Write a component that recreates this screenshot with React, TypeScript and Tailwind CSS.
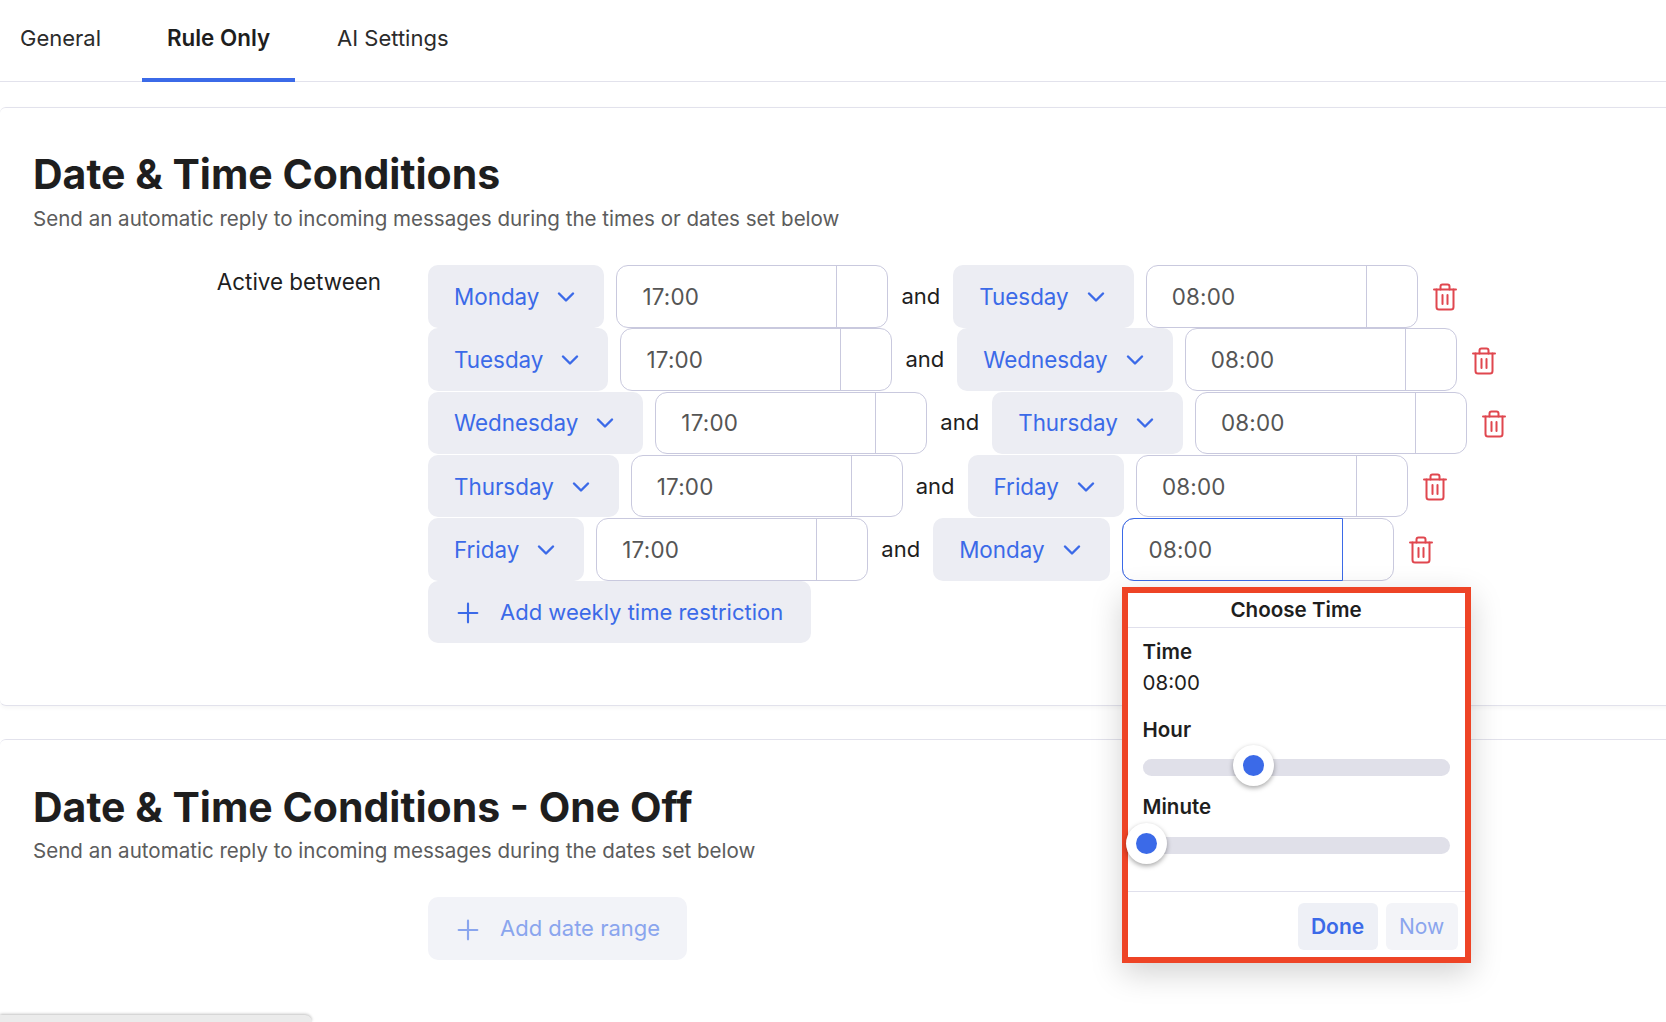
import React from 'react';
import { ChevronDown, Plus } from 'lucide-react';

const rows = [
  { from: 'Monday', to: 'Tuesday' },
  { from: 'Tuesday', to: 'Wednesday' },
  { from: 'Wednesday', to: 'Thursday' },
  { from: 'Thursday', to: 'Friday' },
  { from: 'Friday', to: 'Monday' },
];

function TrashIcon() {
  return (
    <svg width="26" height="28" viewBox="0 0 26 28" fill="none" stroke="#e0474f" strokeWidth="2" strokeLinecap="round" strokeLinejoin="round">
      <path d="M2 6.5h22" />
      <path d="M8.5 6.5V3.5a2 2 0 0 1 2-2h5a2 2 0 0 1 2 2v3" />
      <path d="M4.5 6.5v17.5a2.5 2.5 0 0 0 2.5 2.5h12a2.5 2.5 0 0 0 2.5-2.5V6.5" />
      <path d="M10.5 12v9" />
      <path d="M15.5 12v9" />
    </svg>
  );
}

function DaySelect({ day }: { day: string }) {
  return (
    <button className="flex h-[62.5px] shrink-0 items-center rounded-[10px] bg-[#ecedf3] pl-[26px] pr-[24px] text-[22.4px] text-[#3b6ae8]">
      <span className="mt-px">{day}</span>
      <ChevronDown className="ml-[13px] mt-px" size={28} strokeWidth={2.1} />
    </button>
  );
}

function TimeInput({ value, active, children }: { value: string; active?: boolean; children?: React.ReactNode }) {
  return (
    <div className="relative ml-3 flex h-[62.5px] w-[272px] shrink-0 rounded-[12px] border border-[#c9c9de] bg-white text-[22.4px] tracking-[0.2px] text-[#555555]">
      <div
        className={
          active
            ? '-m-px flex w-[221px] items-center rounded-l-[12px] border border-[#3b6ae8] pl-[26px] pt-px'
            : 'flex w-[220px] items-center border-r border-[#c9c9de] pl-[25px] pt-px'
        }
      >
        {value}
      </div>
      {children}
    </div>
  );
}

function Slider({ thumbClass }: { thumbClass: string }) {
  return (
    <div className="relative h-[17px] rounded-full bg-[#e0e0e9]">
      <div className={`absolute top-[-14px] flex h-[41px] w-[41px] items-center justify-center rounded-full bg-white shadow-[0_2px_5px_rgba(0,0,0,0.35)] ${thumbClass}`}>
        <div className="h-[21px] w-[21px] rounded-full bg-[#3b6ae8]" />
      </div>
    </div>
  );
}

function TimePopover() {
  return (
    <div className="absolute left-[-1px] top-[68px] z-10 w-[349px] border-[6px] border-[#ee4426] bg-white tracking-normal text-[#1e1e1e] shadow-[0_10px_30px_rgba(0,0,0,0.18)]">
      <div className="flex h-[35px] items-center justify-center border-b border-[#e0e0ec] text-[20.6px] font-semibold">Choose Time</div>
      <div className="px-[15px] pt-[8px]">
        <div className="text-[20.5px] font-semibold leading-[32px]">Time</div>
        <div className="text-[20.5px] leading-[30px]">08:00</div>
        <div className="mt-[16px] text-[20.5px] font-semibold leading-[32px]">Hour</div>
        <div className="mt-[13px]">
          <Slider thumbClass="left-[90px]" />
        </div>
        <div className="mt-[15px] text-[20.5px] font-semibold leading-[32px]">Minute</div>
        <div className="mt-[14px]">
          <Slider thumbClass="left-[-17px]" />
        </div>
      </div>
      <div className="mt-[37px] flex justify-end gap-2 border-t border-[#e0e0ec] pb-[7px] pr-[7px] pt-[11px]">
        <button className="flex h-[47px] w-[80px] items-center justify-center rounded-[6px] bg-[#eef0f6] text-[21px] font-semibold text-[#3b6ae8]">Done</button>
        <button className="flex h-[47px] w-[72px] items-center justify-center rounded-[6px] bg-[#f3f4f8] text-[21px] text-[#8aa5ee]">Now</button>
      </div>
    </div>
  );
}

function AddButton({ label, disabled }: { label: string; disabled?: boolean }) {
  return (
    <button
      className={
        disabled
          ? 'flex h-[63px] items-center rounded-[10px] bg-[#f2f3f8] pl-[24px] pr-[27px] text-[#8aa5ee]'
          : 'flex h-[62px] items-center rounded-[10px] bg-[#ecedf3] pl-[24px] pr-[28px] text-[#3b6ae8]'
      }
    >
      <Plus className="mt-[2px]" size={32} strokeWidth={1.6} />
      <span className="ml-[16px]">{label}</span>
    </button>
  );
}

export default function App() {
  return (
    <div className="relative h-[1022px] w-[1666px] overflow-hidden bg-white font-['Inter',sans-serif] text-[22px] text-[#1e1e1e]">
      {/* Tabs */}
      <div className="flex h-[82px] items-start border-b border-[#e2e2ec] text-[22px]">
        <div className="ml-[20px] mt-[23px] leading-[30px] text-[#2b2b2b]">General</div>
        <div className="ml-[41px] flex h-[82px] w-[153px] justify-center border-b-4 border-[#3b6ae8] pt-[23px] text-[22.4px] font-semibold leading-[30px]">Rule Only</div>
        <div className="ml-[42px] mt-[23px] leading-[30px] text-[#2b2b2b]">AI Settings</div>
      </div>

      {/* Weekly conditions */}
      <section className="-mr-4 mt-[25px] h-[599px] rounded-l-[6px] border-y border-[#e2e2ec] bg-white pl-[33px] pt-[40px] shadow-[0_2px_4px_rgba(0,0,0,0.04)]">
        <h1 className="text-[41px] font-bold leading-[52px]">Date &amp; Time Conditions</h1>
        <p className="mt-[4px] text-[20.55px] leading-[30px] text-[#5c5c5c]">Send an automatic reply to incoming messages during the times or dates set below</p>
        <div className="mt-[31px] flex">
          <div className="mt-[2px] w-[348px] text-right text-[22.4px] leading-[30px]">Active between</div>
          <div className="ml-[47px] flex flex-col gap-[0.75px]">
            {rows.map((row, i) => (
              <div key={row.from} className="flex h-[62.5px] items-center">
                <DaySelect day={row.from} />
                <TimeInput value="17:00" />
                <span className="mx-[13px] text-[#1e1e1e]">and</span>
                <DaySelect day={row.to} />
                <TimeInput value="08:00" active={i === 4}>
                  {i === 4 && <TimePopover />}
                </TimeInput>
                <div className="ml-[14px] mt-[2px]">
                  <TrashIcon />
                </div>
              </div>
            ))}
            <div className="flex">
              <AddButton label="Add weekly time restriction" />
            </div>
          </div>
        </div>
      </section>

      {/* One off conditions */}
      <section className="-mr-4 mt-[33px] rounded-l-[6px] border-t border-[#e2e2ec] bg-white pl-[33px] pt-[41px]">
        <h1 className="text-[41px] font-bold leading-[52px]">Date &amp; Time Conditions - One Off</h1>
        <p className="mt-[3px] text-[20.55px] leading-[30px] text-[#5c5c5c]">Send an automatic reply to incoming messages during the dates set below</p>
        <div className="ml-[395px] mt-[31px] flex">
          <AddButton label="Add date range" disabled />
        </div>
      </section>

      {/* Window edge peeking in at the bottom */}
      <div className="absolute bottom-0 left-0 h-[7px] w-[312px] rounded-tr-[8px] bg-[#ebebeb] shadow-[0_-1px_3px_rgba(0,0,0,0.25)]" />
    </div>
  );
}
